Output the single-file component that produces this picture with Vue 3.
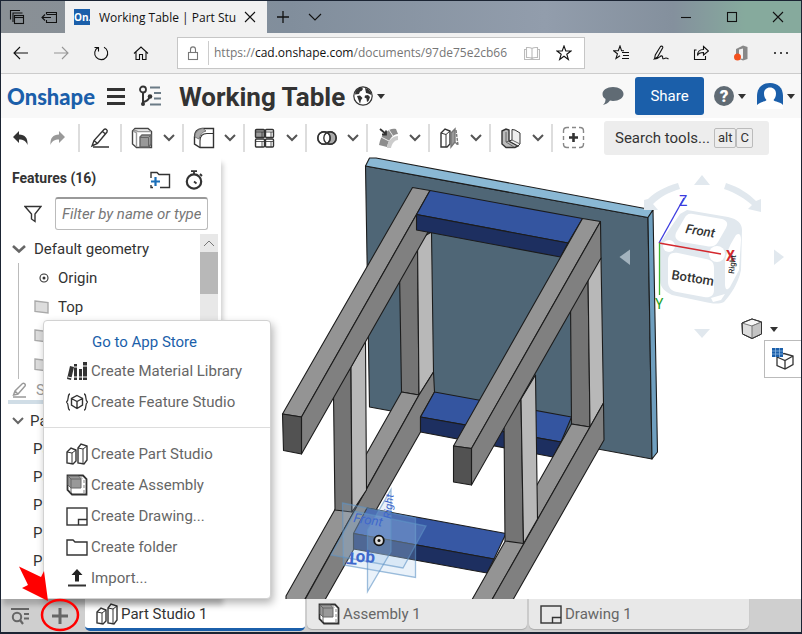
<script setup>
import { ref } from 'vue'

const filter = ref('')
const activeTab = ref('Part Studio 1')

const icons = {
  // window chrome
  tabsAside: '<path d="M1.5 10.5V1.5H11M4 13V4H13.5" /><rect x="5.5" y="6.5" width="9" height="8" /><path d="M5.5 8.5H14.5" />',
  setAside: '<path d="M5.5 5V3.5H15.5V13.5H5.5V11M5.5 5.5H15.5M10 8.5H1M4 5.5L1 8.5L4 11.5" />',
  back: '<path d="M15 8H1M7 2L1 8L7 14" />',
  forward: '<path d="M1 8H15M9 2L15 8L9 14" />',
  refresh: '<path d="M5 2.5A6.5 6.5 0 1 0 11 2.3M1.5 2.5H5.5V6.5" />',
  home: '<path d="M1 8.5L8 2L15 8.5M3 7V14.5H6.5V9.5H9.5V14.5H13V7" />',
  favorites: '<path d="M11 5.8H8.6L7 1L5.3 5.8H.5L4.400 8.8L3 13.5L7 10.8M9 7.5H16M10 10.5H16M9 13.5H16" />',
  pen: '<path d="M1.5 14L2.3 10L7.5 1.5C8.5.5 10.3 1.5 9.6 3L4.5 12L1.5 14C6 14.5 8 9 9.5 11.5C10 13 9 14.5 11.5 13.5C13 12.5 14 13 15.5 14" />',
  share: '<path d="M3.5 5H1.5V14.5H12.5V11M10.5 1.5L15.5 6L10.5 10V7.5C7 7.5 5 9 4.5 10.5C4.5 7 6.5 4.5 10.5 4.5Z" />',
  office: '<path d="M3 4L10 .5L14.5 2V14L10 15.5L5 13.5L10 13.8V3.500L6 4.5V10H3Z" fill="#888" stroke="none" /><circle cx="4.500" cy="12" r="3.5" fill="#f4511e" stroke="none" />',
  more: '<path d="M1 8H3M7 8H9M13 8H15" stroke-width="1.6" />',
  // feature toolbar
  extrude: '<path d="M4 1.5H17L20.5 4.5V20.5H5.5L1.5 17V4Z" fill="#fff" stroke="#444" /><path d="M2 4L5.5 6V20M3 3L7 4.5H20" stroke="#999" /><path d="M9 10L11 8H20V17L18 20H9Z" fill="#999" stroke="#666" /><path d="M9 10.5H17.5V20M17.5 10.5L20 8" stroke="#666" stroke-width="1" />',
  fillet: '<path d="M9 1.5H20.5V20.5H7L1.5 17V10C1.5 5 4 2 9 1.5Z" fill="#fff" /><path d="M7 20V14C7 9 10 6.500 14 6.5H20" stroke-width="1.1" /><path d="M2 10C2 5 5 2 10 1.5L13 4C9 5 7 8 6 12Z" fill="#aaa" stroke="#777" stroke-width="1" />',
  pattern: '<rect x="1.5" y="2.5" width="9" height="8" rx="1" fill="#9a9a9a" /><rect x="11.5" y="2.5" width="8" height="8" rx="1" /><rect x="1.5" y="12" width="9" height="8" rx="1" /><rect x="11.5" y="12" width="8" height="8" rx="1" /><path d="M2 5H10M12 5H19M2 14.5H10M12 14.5H19M8 5V10M17 5V10M8 14.5V20M17 14.5V20" stroke-width=".8" />',
  boolean: '<circle cx="14" cy="11" r="6.2" fill="#aaa" /><circle cx="8" cy="11" r="6.2" fill="#fff" /><circle cx="14" cy="11" r="6.2" /><circle cx="8" cy="11" r="6.2" />',
  move: '<path d="M8 6C12 2 16 1 19 2L21 7C16 7 12 12 10 20L2 18C3 12 5 8 8 6Z" fill="#8d8d8d" stroke="none" /><path d="M4 10L12 14M12 3L16 9" stroke="#eee" stroke-width="1" /><path d="M10 21C10 15 15 9 21 9V13C18 13 15 16 14 21Z" fill="#ccc" stroke="none" /><path d="M3 2L9 7M9 3.5V7.5H5" stroke-width="1.8" />',
  split: '<path d="M2 6L6 2L11 4V17L8 20H2Z" fill="#fff" /><path d="M2 6L7 7.5L11 4M7 7.5V20" stroke-width="1" /><path d="M12 6L16 2V15L12 20Z" fill="#999" stroke="#777" /><path d="M17 3L19 18L16 15" stroke="#777" stroke-dasharray="3 1" />',
  plane: '<path d="M2 4L6 2L9 3V14L18 19L15 20.5H6L2 17Z" fill="#bbb" /><path d="M9 14L12 13V2.5L15 3L20 6V17L18 19L9 14Z" fill="#eee" stroke-width="1" /><path d="M6 5V15L9 14M6 15L14 20M12 13L20 17" stroke="#666" stroke-width="1" />',
  addTool: '<path d="M7 1.5H5C3 1.5 1.5 3 1.5 5V7M10 1.5H14M17 1.5H18C20 1.5 21.5 3 21.5 5V7M21.5 10V14M21.5 17V18C21.5 20 20 21.5 18 21.5H17M14 21.5H10M7 21.5H5C3 21.5 1.5 20 1.5 18V17M1.5 14V10" stroke="#888" /><path d="M7 11.5H16M11.5 7V16" stroke-width="2.6" />',
  // document elements
  library: '<path d="M1 19L4 6L8 7L5 20ZM8 4H11V20H8ZM13 9H16V20H13ZM17 2H21V20H17Z" fill="#333" stroke="none" /><path d="M2 17L6 18M8 7H11M8 17H11M13 17H16M17 6H21M17 17H21" stroke="#fff" stroke-width="1" />',
  feature: '<path d="M4 3C1 3 3.5 9 .5 11C3.5 13 1 19 4 19M18 3C21 3 18.5 9 21.5 11C18.5 13 21 19 18 19" stroke-width="1.3" /><path d="M11 4.5L16.5 7.5V14L11 17.5L5.5 14V7.5ZM5.5 7.5L11 10.5L16.5 7.5M11 10.5V17.5" />',
  part: '<path d="M1 9L5 5L10 7V18L7 21L1 20Z" fill="#fff" /><path d="M1 9L6 10L10 7M6 10V21" stroke-width="1" /><path d="M12 5L15 1L21 3V17L18 21L12 20Z" fill="#fff" /><path d="M12 5L17 6L21 3M17 6V21" stroke-width="1" />',
  assembly: '<path d="M1.5 1.5H17L20.5 5V20.5H6L1.5 16Z" fill="#fff" stroke-width="1.8" /><path d="M2 2H12.5L15 5V14H5L2 11Z" fill="#999" stroke="#666" stroke-width="1" /><path d="M2 2L5 5H15M5 5V19" stroke="#666" stroke-width="1" /><path d="M14 3L18 6V20" stroke="#aaa" stroke-dasharray="3 2" />',
  drawing: '<rect x="1" y="3" width="20" height="17" /><path d="M12.5 20V14.5H21" />',
  folder: '<path d="M1 19V4H7L9 6H21V19Z" />',
  import: '<path d="M11 2L16.5 8H13V14.5H9V8H5.5Z" fill="#222" stroke="none" /><path d="M2 18.5H20" stroke-width="2" />',
}

const tools = ['extrude', 'fillet', 'pattern', 'boolean', 'move', 'split', 'plane']
const planes = ['Top', 'Front', 'Right']
const parts = ['Part 1', 'Part 2', 'Part 3', 'Part 4', 'Part 5']

const appItems = [
  { icon: 'library', label: 'Create Material Library' },
  { icon: 'feature', label: 'Create Feature Studio' },
]

const createItems = [
  { icon: 'part', label: 'Create Part Studio' },
  { icon: 'assembly', label: 'Create Assembly' },
  { icon: 'drawing', label: 'Create Drawing...' },
  { icon: 'folder', label: 'Create folder' },
  { icon: 'import', label: 'Import...' },
]

const tabs = [
  { icon: 'part', label: 'Part Studio 1' },
  { icon: 'assembly', label: 'Assembly 1' },
  { icon: 'drawing', label: 'Drawing 1' },
]

// painter's order, back to front
const faces = [
  { fill: '#4f6676', points: '365.5,166 648,217.5 652,459 369.5,407' },
  { fill: '#8ab8d4', points: '365.5,166 369.5,158 376,158 653,210 648,217.5' },
  { fill: '#6f9fbf', points: '648,217.5 653,210 657.5,452 652,459' },
  { fill: '#747474', points: '399.5,270 417.5,240 419,395 401.5,392' },
  { fill: '#b8b8b8', points: '417.5,240 431.5,232 433.5,372 419,395' },
  { fill: '#747474', points: '570.5,300 588,275 590,427 571.5,424' },
  { fill: '#b8b8b8', points: '588,275 601,258 603.5,403 590,427' },
  { fill: '#949494', points: '401.5,392 419,395 305,599 305,605 286,605 286,596' },
  { fill: '#808080', points: '419,395 433.5,372 434.5,392 420.5,417 420.5,432 322,605 302,605' },
  { fill: '#3455a0', points: '434.5,392 571.5,417 561,442 420.5,417' },
  { fill: '#1d2f60', points: '420.5,417 561,442 553,457 420.5,432' },
  { fill: '#3758a4', points: '367,508 506,533.5 494,559 353.5,533.5' },
  { fill: '#1d2f60', points: '353.5,533.5 494,559 487,573 353.5,549' },
  { fill: '#949494', points: '571.5,424 590,427 489,605 469,605' },
  { fill: '#808080', points: '590,427 603.5,403 604,440 510,605 489,605' },
  { fill: '#747474', points: '333.5,395 351,367 352,512 335,510' },
  { fill: '#b8b8b8', points: '351,367 365.5,341 366.5,490 352,512' },
  { fill: '#747474', points: '504,420 521,399 523.5,543.5 505,541' },
  { fill: '#b8b8b8', points: '521,399 535.5,375 537.5,519 523.5,543.5' },
  { fill: '#949494', points: '412.5,187.5 430,190.5 416.5,214.5 301.5,417 282.5,414' },
  { fill: '#808080', points: '416.5,214.5 428,232 301.5,454 301.5,417' },
  { fill: '#525252', points: '282.5,414 301.5,417 301.5,454 283.5,450.5' },
  { fill: '#3455a0', points: '430,190.5 582.5,218.5 568,243 416.5,214.5' },
  { fill: '#1d2f60', points: '416.5,214.5 568,243 560.5,257 416.5,230' },
  { fill: '#949494', points: '582.5,218.5 600.5,221.5 471.5,448.5 453.5,446' },
  { fill: '#808080', points: '600.5,221.5 601,258 471.5,485 471.5,448.5' },
  { fill: '#525252', points: '453.5,446 471.5,448.5 471.5,485 453.5,482' },
]

const datumPlanes = [
  '342.5,503 415.5,518 415.5,577.5 343.5,565',
  '355,511.5 426,526 403,568 331,555',
  '367.5,530 391,489.5 391,551.5 367.5,591.5',
]
</script>

<template>
  <div class="window">
    <header class="titlebar">
      <button class="chrome-btn" aria-label="Tabs set aside"><svg viewBox="0 0 16 16" v-html="icons.tabsAside"></svg></button>
      <button class="chrome-btn" aria-label="Set tabs aside"><svg viewBox="0 0 16 16" v-html="icons.setAside"></svg></button>
      <div class="browser-tab">
        <span class="favicon">On.</span>
        <span class="browser-tab-title">Working Table | Part Stu</span>
        <button class="tab-close" aria-label="Close tab">
          <svg viewBox="0 0 16 16"><path d="M3 3L13 13M13 3L3 13" /></svg>
        </button>
      </div>
      <button class="chrome-btn" aria-label="New tab"><svg viewBox="0 0 16 16"><path d="M8 2V14M2 8H14" stroke-width="1.3" /></svg></button>
      <button class="chrome-btn" aria-label="Tab list"><svg viewBox="0 0 16 16"><path d="M2 5L8 11L14 5" /></svg></button>
      <div class="spacer"></div>
      <button class="win-btn" aria-label="Minimize"><svg viewBox="0 0 16 16"><path d="M3 8.5H13" /></svg></button>
      <button class="win-btn" aria-label="Maximize"><svg viewBox="0 0 16 16"><rect x="3.5" y="3.5" width="9" height="9" /></svg></button>
      <button class="win-btn" aria-label="Close"><svg viewBox="0 0 16 16"><path d="M3 3L13 13M13 3L3 13" /></svg></button>
    </header>

    <nav class="navbar">
      <button class="nav-btn" aria-label="Back"><svg viewBox="0 0 16 16" v-html="icons.back"></svg></button>
      <button class="nav-btn faded" aria-label="Forward"><svg viewBox="0 0 16 16" v-html="icons.forward"></svg></button>
      <button class="nav-btn" aria-label="Refresh"><svg viewBox="0 0 16 16" v-html="icons.refresh"></svg></button>
      <button class="nav-btn" aria-label="Home"><svg viewBox="0 0 16 16" v-html="icons.home"></svg></button>
      <div class="address">
        <svg class="lock" viewBox="0 0 16 16"><rect x="3.5" y="7.5" width="9" height="7" /><path d="M5.5 7V4.5C5.5 1 10.5 1 10.5 4.5V7" /></svg>
        <span class="url">https://<b>cad.onshape.com</b>/documents/97de75e2cb66</span>
        <svg class="book" viewBox="0 0 16 16"><path d="M8 3.5C6 2 3 2.5 2.5 2.5V12.5C4 12.5 6 12 8 13.5C10 12 12 12.5 13.5 12.5V2.5C12 2.5 10 2 8 3.5V13.5M2 4.5H.5V14.5H15.5V4.5H14" /></svg>
        <svg class="star" viewBox="0 0 16 16"><path d="M8 1L9.8 6H15L10.8 9.2L12.4 14.5L8 11.3L3.6 14.5L5.2 9.2L1 6H6.2Z" /></svg>
      </div>
      <button class="nav-btn" aria-label="Favorites"><svg viewBox="0 0 16 16" v-html="icons.favorites"></svg></button>
      <button class="nav-btn" aria-label="Add notes"><svg viewBox="0 0 16 16" v-html="icons.pen"></svg></button>
      <button class="nav-btn" aria-label="Share page"><svg viewBox="0 0 16 16" v-html="icons.share"></svg></button>
      <button class="nav-btn" aria-label="Office"><svg viewBox="0 0 16 16" v-html="icons.office"></svg></button>
      <button class="nav-btn" aria-label="More"><svg viewBox="0 0 16 16" v-html="icons.more"></svg></button>
    </nav>

    <div class="doc-header">
      <a class="logo" href="#">Onshape</a>
      <button class="icon-btn menu-btn" aria-label="Main menu">
        <svg width="20" height="20" viewBox="0 0 20 20"><path d="M1 3.5H19M1 10.5H19M1 17.5H19" stroke-width="3" /></svg>
      </button>
      <button class="icon-btn" aria-label="Versions and history">
        <svg width="24" height="22" viewBox="0 0 24 22">
          <circle cx="5" cy="4.5" r="3" stroke-width="1.8" />
          <path d="M5 8V20M5 17C10 16 11 14 11.5 12" stroke-width="2" />
          <circle cx="5" cy="19" r="2" fill="#333" stroke="none" /><circle cx="12" cy="11.5" r="2.3" fill="#333" stroke="none" />
          <path d="M12 2.5H22M16 8H23M16 13.5H23M12 19.5H23" stroke="#6b7b86" stroke-width="1.8" />
        </svg>
      </button>
      <h1>Working Table</h1>
      <button class="icon-btn" aria-label="Public document">
        <svg width="20" height="20" viewBox="0 0 20 20">
          <circle cx="10" cy="10" r="9.2" fill="#fff" stroke-width="1.2" />
          <path d="M2.5 5L6 2L9 1.5L10 3L8.5 5L7 5.500L6 8L2 8.5ZM4 10L7 9.500L9.5 12L8 14L7 18L5.5 14ZM12 2L15 3L18 6.500L18.5 9L15 7.5L13 7L12.500 4.5ZM12 9.500L15 9L17 11L15.5 15L14 16L13.5 12.500L11.5 11.5Z" fill="#333" stroke="none" />
        </svg>
        <span class="caret"></span>
      </button>
      <div class="spacer"></div>
      <button class="icon-btn comment-btn" aria-label="Comments">
        <svg width="22" height="20" viewBox="0 0 22 20"><path d="M11 1C17 1 21.5 4 21.5 8C21.5 12 17 15 11 15C10 15 9 15 8 14.6C6 17 4 18.5 1 19C3 17 3.5 15.5 3.5 13C1.5 12 .5 10 .5 8C.5 4 5 1 11 1Z" fill="#606b74" stroke="none" /></svg>
      </button>
      <button class="share-btn">Share</button>
      <button class="icon-btn help-btn" aria-label="Help">
        <span class="help">?</span><span class="caret"></span>
      </button>
      <button class="icon-btn" aria-label="Account">
        <svg width="26" height="26" viewBox="0 0 26 26">
          <path d="M0 24V13C0 5 5 0 13 0S26 5 26 13V24Z" fill="#1b5faa" stroke="none" />
          <path d="M13 4.5C9.5 4.5 7 7 7 10.5C7 13.5 8 15.5 9.5 17C8 19 3 18.5 0 22V26H26V22C23 18.5 18 19 16.5 17C18 15.5 19 13.5 19 10.5C19 7 16.5 4.5 13 4.5Z" fill="#fff" stroke="none" />
        </svg>
        <span class="caret"></span>
      </button>
    </div>

    <div class="toolbar">
      <button class="icon-btn undo" aria-label="Undo">
        <svg width="16" height="16" viewBox="0 0 16 16"><path d="M6 1V4.5C12 4.5 15 8 14.5 15C13 11 10.5 9.5 6 9.5V13L0 7Z" fill="#333" stroke="none" /></svg>
      </button>
      <button class="icon-btn redo" aria-label="Redo">
        <svg width="16" height="16" viewBox="0 0 16 16"><path d="M10 1V4.5C4 4.5 1 8 1.5 15C3 11 5.5 9.5 10 9.5V13L16 7Z" fill="#999" stroke="none" /></svg>
      </button>
      <button class="icon-btn sketch" aria-label="Sketch">
        <svg width="20" height="22" viewBox="0 0 20 22"><path d="M2 19L4 13.5L14 2.5C15.5 1 18 3 17 5L7.5 16.5ZM4 13.5L7.5 16.5M12.5 4.5L15.5 7" stroke-width="1.4" /><path d="M3 20H19" stroke-width="1.5" /></svg>
      </button>
      <div class="tool-groups">
        <div v-for="tool in tools" :key="tool" class="tool-group">
          <button class="icon-btn" :aria-label="tool"><svg width="22" height="22" viewBox="0 0 22 22" v-html="icons[tool]"></svg></button>
          <button class="icon-btn" :aria-label="tool + ' options'"><svg width="12" height="10" viewBox="0 0 12 10"><path d="M1 2L6 7L11 2" stroke="#555" stroke-width="2" /></svg></button>
        </div>
      </div>
      <button class="icon-btn add-tool" aria-label="Add custom features"><svg width="23" height="23" viewBox="0 0 23 23" v-html="icons.addTool"></svg></button>
      <button class="search-tools">Search tools... <span class="keys"><kbd>alt</kbd><kbd>C</kbd></span></button>
    </div>

    <main class="workspace">
      <aside class="sidebar">
        <div class="sidebar-head">
          <h2>Features (16)</h2>
          <button class="icon-btn" aria-label="Add folder">
            <svg width="22" height="18" viewBox="0 0 22 18"><path d="M2 7V1.5H8L10 3.5H20.5V16.5H11M2 14V16.5H4" /><path d="M2 10.5H11M6.5 6V15" stroke="#1b6fb8" stroke-width="2.2" /></svg>
          </button>
          <button class="icon-btn" aria-label="Regeneration times">
            <svg width="20" height="20" viewBox="0 0 20 20"><circle cx="10" cy="11.5" r="7.2" stroke-width="2.2" /><path d="M7 1.2H13M10 1V4M16 4L18 6M10 11.5L12.5 13.5" stroke-width="1.8" /></svg>
          </button>
        </div>
        <div class="filter-row">
          <svg width="18" height="18" viewBox="0 0 18 18"><path d="M1 1.5H17L11 9V16.5L7.5 14V9Z" /></svg>
          <input v-model="filter" type="text" aria-label="Filter features" placeholder="Filter by name or type" />
        </div>
        <div class="list-wrap">
          <ul class="feature-list">
            <li class="row group-row">
              <svg width="14" height="10" viewBox="0 0 14 10"><path d="M1 2L7 7.5L13 2" stroke="#666" stroke-width="2.6" /></svg>
              Default geometry
            </li>
            <li class="geometry">
              <ul>
                <li class="row">
                  <svg width="16" height="12" viewBox="0 0 16 12"><circle cx="10" cy="6" r="4" stroke-width="1.1" /><circle cx="10" cy="6" r="1.5" fill="#333" stroke="none" /></svg>
                  Origin
                </li>
                <li v-for="plane in planes" :key="plane" class="row">
                  <svg width="16" height="14" viewBox="0 0 16 14"><path d="M1 1L14 2.5V13L1 11.5Z" fill="#ddd" stroke="#aaa" /></svg>
                  {{ plane }}
                </li>
              </ul>
            </li>
            <li class="row sketch-row">
              <svg width="16" height="16" viewBox="0 0 16 16"><path d="M1.5 13L3 9L10.5 1.5C12 .5 14 2.5 13 4L6 12ZM3 9L6 12M1 15H14" stroke="#999" /></svg>
              Sketch 1
            </li>
            <li class="row parts-row">
              <svg width="12" height="10" viewBox="0 0 12 10"><path d="M1 2L6 7L11 2" stroke="#666" stroke-width="2" /></svg>
              Parts (13)
            </li>
            <li v-for="part in parts" :key="part" class="row part-row">{{ part }}</li>
          </ul>
          <div class="scrollbar">
            <svg width="18" height="18" viewBox="0 0 18 18"><path d="M4 12L9 7L14 12" stroke="#777" stroke-width="1" /></svg>
            <div class="thumb"></div>
          </div>
        </div>
      </aside>

      <section class="canvas">
        <svg class="model" viewBox="221 157 580 442" preserveAspectRatio="xMinYMin meet">
          <g stroke="#1c1c1c" stroke-width="1.1" stroke-linejoin="round">
            <polygon v-for="(face, i) in faces" :key="i" :points="face.points" :fill="face.fill" />
          </g>
          <g fill="#9fc3e6" fill-opacity=".22" stroke="#5d92c4" stroke-opacity=".6" stroke-width="1.3">
            <polygon v-for="points in datumPlanes" :key="points" :points="points" />
          </g>
          <g class="datum-names">
            <text transform="translate(353 522) rotate(9)" font-size="13" font-style="italic">Front</text>
            <text transform="translate(347 552) rotate(4) scale(1 -1)" font-size="17" font-weight="700">Top</text>
            <text transform="translate(391 519) rotate(-84)" font-size="11" font-style="italic">Right</text>
          </g>
          <circle cx="379" cy="540.5" r="4.8" fill="#ddd" stroke="#111" stroke-width="1.8" />
          <circle cx="379" cy="540.5" r="1.5" fill="#111" />
        </svg>

        <svg class="view-cube" width="182" height="175" viewBox="618 170 182 175">
          <g fill="#e1e8ee">
            <path d="M702 175L710 185H694Z" /><path d="M702 338L710 329H694Z" />
            <path d="M619.5 257L630 249.5V265Z" fill="#a3b3be" /><path d="M784 257L774 249.5V265Z" />
            <path d="M678 183C664 187 654 193 648 199L644 200V210L658 210L653 204C660 197 669 192 680 189Z" />
            <path d="M726 183C739 187 749 194 756 201L761 199V212L748 209L752 205C745 199 736 193 724 189Z" />
            <path d="M687 210L728 217C738 219 742 224 742 230L741 270C738 285 730 295 724 302C718 305 710 303 705 302L672 295C666 292 660 288 660 280L660 243L680 214Z" />
          </g>
          <g fill="#fff">
            <path d="M693 214L722 219C728 221 728 224 726 228L718 242C715 247 711 247 706 246L682 242C675 240 674 236 677 231L684 219C686 215 688 213 693 214Z" />
            <path d="M678 253L706 259C712 260 714 263 714 268V290C714 296 710 298 704 297L677 292C671 291 668 287 668 282V260C668 255 671 252 678 253Z" />
            <path d="M736 235C740 232 741 236 741 240L739 270L730 287C726 292 725 288 725 283V262C726 252 731 243 736 235Z" />
            <circle cx="717" cy="254" r="8" /><circle cx="669" cy="246" r="6" />
            <path d="M711 298L725 294L721 300L713 302Z" />
          </g>
          <g stroke-width="1.3">
            <path d="M659 243L684 198" stroke="#3c3ce0" />
            <path d="M659 243L721 254" stroke="#d4282e" />
            <path d="M659.5 243V295" stroke="#3fb52f" />
          </g>
          <text x="679" y="206" font-size="14" fill="#3c3ce0">Z</text>
          <text x="726" y="261" font-size="14" font-weight="700" fill="#d4282e">X</text>
          <text x="655" y="309" font-size="14" fill="#1ea01e">Y</text>
          <g fill="#333" font-weight="500">
            <text transform="translate(685 233) rotate(9)" font-size="13" font-style="italic">Front</text>
            <text transform="translate(671 279) rotate(9)" font-size="13">Bottom</text>
            <text transform="translate(734 274) rotate(-84)" font-size="8">Right</text>
          </g>
        </svg>

        <button class="icon-btn view-btn" aria-label="View options">
          <svg width="22" height="22" viewBox="0 0 22 22" stroke-linejoin="round"><g stroke-width="1"><path d="M1 5L11 1L20.5 4V16L11 20.5L1.5 16Z" fill="#ddd" /><path d="M1 5L11 8L20.5 4L11 1Z" fill="#f6f6f6" stroke="#777" /><path d="M11 8V20.5L20.5 16V4Z" fill="#c4c4c4" stroke="#777" /><path d="M1 5L11 1L20.5 4V16L11 20.5L1.5 16Z" /></g></svg>
          <span class="caret"></span>
        </button>
        <button class="panel-btn" aria-label="Configuration panel">
          <svg width="22" height="22" viewBox="0 0 22 22"><path d="M5 9L12 5.5L21 8V16.5L13 21L5 17.5ZM5 9L13 12.5L21 8M13 12.5V21" fill="#fff" stroke-width="1.3" /><rect x="0" y="0" width="11" height="9" fill="#1b5faa" stroke="none" /><path d="M0 3H11M0 6H11M3.5 0V9M7.5 0V9" stroke="#9cc3ea" stroke-width=".7" /></svg>
        </button>
      </section>

      <div class="create-menu" role="menu">
        <a class="store-link" href="#" role="menuitem">Go to App Store</a>
        <button v-for="item in appItems" :key="item.label" class="menu-item" role="menuitem">
          <svg width="22" height="22" viewBox="0 0 22 22" v-html="icons[item.icon]"></svg>{{ item.label }}
        </button>
        <hr />
        <button v-for="item in createItems" :key="item.label" class="menu-item" role="menuitem">
          <svg width="22" height="22" viewBox="0 0 22 22" v-html="icons[item.icon]"></svg>{{ item.label }}
        </button>
      </div>
    </main>

    <footer class="tabbar">
      <button class="icon-btn tab-manager" aria-label="Tab manager">
        <svg width="20" height="18" viewBox="0 0 20 18"><path d="M1 2H19M14 7H19M14 11.5H19" stroke="#666" stroke-width="1.8" /><circle cx="7" cy="10" r="4.2" stroke="#666" stroke-width="2" /><path d="M10 13L13 17" stroke="#666" stroke-width="2.2" /></svg>
      </button>
      <button class="icon-btn insert" aria-label="Insert new element">
        <svg width="18" height="18" viewBox="0 0 18 18"><path d="M1 9H17M9 1V17" stroke="#666" stroke-width="3" /></svg>
        <svg class="callout" width="66" height="68" viewBox="15 565 66 68">
          <path d="M19 566.5L41 577L44 571L48 601L22 588L28 585Z" fill="#f00" stroke="none" />
          <ellipse cx="60" cy="615" rx="18" ry="15" stroke="#f00" stroke-width="2.5" />
        </svg>
      </button>
      <button
        v-for="tab in tabs"
        :key="tab.label"
        class="tab"
        :class="{ active: tab.label === activeTab }"
        @click="activeTab = tab.label"
      >
        <svg width="22" height="22" viewBox="0 0 22 22" v-html="icons[tab.icon]"></svg>{{ tab.label }}
      </button>
    </footer>
  </div>
</template>

<style>
body {
  margin: 0;
}
</style>

<style scoped>
.window {
  display: flex;
  flex-direction: column;
  box-sizing: border-box;
  min-height: 100vh;
  border: 1px solid #1b2433;
  border-bottom-width: 2px;
  background: #fff;
  color: #333;
  font-family: Roboto, "Liberation Sans", sans-serif;
  font-size: 15px;
  overflow: hidden;
}

.window * {
  box-sizing: border-box;
}

svg {
  flex: none;
  fill: none;
  stroke: #333;
  stroke-width: 1.4;
}

button {
  padding: 0;
  border: 0;
  background: none;
  color: inherit;
  font: inherit;
}

ul {
  margin: 0;
  padding: 0;
  list-style: none;
}

.spacer {
  flex: 1;
}

.titlebar,
.navbar {
  display: flex;
  align-items: center;
  font-family: "Open Sans", "Noto Sans", sans-serif;
  font-size: 12px;
}

.titlebar svg,
.navbar svg {
  width: 16px;
  height: 16px;
  stroke: #111;
  stroke-width: 1.1;
}

.titlebar {
  height: 32px;
  background: linear-gradient(90deg, #8a9095 0%, #818e9c 36%, #929dac 68%, #84909d 84%, #86aa9d 93%, #86aa9d 100%);
}

.chrome-btn,
.win-btn {
  display: flex;
  align-items: center;
  justify-content: center;
  width: 32px;
  height: 32px;
}

.win-btn {
  width: 46px;
}

.browser-tab {
  display: flex;
  align-items: center;
  width: 202px;
  height: 32px;
  padding-left: 9px;
  background: #f1f1f1;
  color: #111;
}

.favicon {
  width: 16px;
  height: 16px;
  background: #1b5faa;
  color: #fff;
  font-size: 10px;
  font-weight: 700;
  line-height: 16px;
  overflow: hidden;
}

.browser-tab-title {
  flex: 1;
  margin-left: 9px;
  white-space: nowrap;
  overflow: hidden;
}

.tab-close {
  display: flex;
  margin-right: 9px;
}

.navbar {
  height: 41px;
  border-bottom: 1px solid #ccc;
  background: #f1f1f1;
}

.nav-btn {
  display: flex;
  align-items: center;
  justify-content: center;
  flex: none;
  width: 40px;
  height: 40px;
}

.nav-btn.faded {
  opacity: 0.4;
}

.address {
  display: flex;
  align-items: center;
  flex: 1;
  min-width: 0;
  height: 32px;
  margin: 0 16px;
  padding-left: 7px;
  border: 1px solid #c6c6c6;
  background: #fff;
  color: #767676;
}

.address .lock {
  stroke: #777;
}

.url {
  flex: 1;
  margin-left: 7px;
  padding-left: 5px;
  border-left: 1px solid #ccc;
  line-height: 24px;
  white-space: nowrap;
  overflow: hidden;
}

.url b {
  color: #111;
  font-weight: 400;
}

.address .book {
  margin: 0 16px 0 8px;
  stroke: #bbb;
}

.address .star {
  margin-right: 12px;
}

.doc-header {
  display: flex;
  align-items: center;
  height: 44px;
  padding: 0 6px;
  background: #f8f8f8;
}

.logo {
  width: 99px;
  color: #1b5faa;
  font-family: Lato, sans-serif;
  font-size: 22px;
  font-weight: 900;
  text-decoration: none;
}

.icon-btn {
  display: flex;
  align-items: center;
  flex: none;
}

.menu-btn {
  margin-right: 12px;
}

h1 {
  margin: 2px 8px 0 17px;
  font-size: 26px;
  font-weight: 700;
  white-space: nowrap;
}

.caret {
  width: 0;
  margin-left: 4px;
  border: 4px solid transparent;
  border-top: 5px solid #333;
  border-bottom: 0;
}

.comment-btn {
  margin-right: 11px;
}

.share-btn {
  width: 69px;
  height: 38px;
  border-radius: 3px;
  background: #1b5faa;
  color: #fff;
}

.help-btn {
  margin: 0 11px 0 10px;
}

.help {
  width: 20px;
  height: 20px;
  border-radius: 50%;
  background: #606b74;
  color: #fff;
  font-size: 17px;
  font-weight: 900;
  line-height: 20px;
}

.toolbar {
  display: flex;
  align-items: center;
  height: 39px;
}

.undo {
  margin-left: 12px;
}

.redo {
  margin: 0 13px 0 20px;
}

.sketch {
  width: 42px;
  height: 28px;
  padding-left: 10px;
  border-left: 2px solid #ddd;
}

.tool-groups {
  display: grid;
  grid-template-columns: repeat(7, 1fr);
  width: 431px;
}

.tool-group {
  display: flex;
  align-items: center;
  justify-content: space-between;
  height: 28px;
  padding: 0 7px 0 9px;
  border-left: 2px solid #ddd;
}

.add-tool {
  height: 28px;
  padding-left: 9px;
  border-left: 2px solid #ddd;
}

.search-tools {
  display: flex;
  align-items: center;
  gap: 4px;
  width: 165px;
  height: 34px;
  margin-left: 19px;
  padding-left: 11px;
  border-radius: 3px;
  background: #ededed;
  white-space: nowrap;
}

.keys {
  display: flex;
}

kbd {
  height: 20px;
  padding: 0 3px;
  border: 1px solid #bbb;
  border-radius: 2px;
  font-family: inherit;
  font-size: 13px;
  line-height: 18px;
}

.workspace {
  position: relative;
  display: flex;
  flex: 1;
}

.sidebar {
  display: flex;
  flex-direction: column;
  width: 220px;
  box-shadow: 2px 6px 5px rgba(0, 0, 0, 0.2);
}

.sidebar-head {
  display: flex;
  align-items: center;
  gap: 13px;
  height: 40px;
  padding: 6px 17px 0 11px;
}

h2 {
  flex: 1;
  margin: 0;
  font-size: 14px;
  font-weight: 700;
  line-height: 20px;
  padding-bottom: 4px;
  white-space: nowrap;
}

.filter-row {
  display: flex;
  align-items: center;
  gap: 13px;
  padding: 0 13px 0 23px;
}

.filter-row input {
  flex: 1;
  min-width: 0;
  height: 33px;
  padding: 0 6px;
  border: 1px solid #bbb;
  border-top: 2px solid #999;
  border-radius: 3px;
  font: italic 15px Roboto, "Liberation Sans", sans-serif;
}

.filter-row input::placeholder {
  color: #777;
}

.list-wrap {
  display: flex;
  flex: 1;
  margin-top: 4px;
}

.feature-list {
  flex: 1;
}

.row {
  display: flex;
  align-items: center;
  gap: 8px;
  height: 29px;
  padding-left: 11px;
  white-space: nowrap;
}

.geometry {
  margin-left: 17px;
  border-left: 1px solid #bbb;
}

.geometry .row {
  padding-left: 15px;
}

.sketch-row {
  height: 25px;
  margin-left: 7px;
  padding-left: 4px;
  border-bottom: 4px solid #d0dde6;
  color: #999;
}

.parts-row {
  height: 28px;
  margin-top: 3px;
  gap: 6px;
}

.part-row {
  height: 28px;
  padding-left: 32px;
}

.scrollbar {
  width: 18px;
  margin-right: 3px;
  background: #e8e8e8;
}

.scrollbar svg {
  display: block;
}

.thumb {
  height: 42px;
  background: #b8b8b8;
}

.canvas {
  position: relative;
  flex: 1;
  min-width: 0;
}

.model,
.view-cube {
  stroke: none;
}

.model {
  display: block;
  width: 100%;
}

.datum-names {
  fill: #3f68cc;
}

.view-cube {
  position: absolute;
  top: 13px;
  right: 1px;
}

.view-btn {
  position: absolute;
  top: 161px;
  right: 23px;
}

.panel-btn {
  position: absolute;
  top: 183px;
  right: 0;
  display: flex;
  align-items: center;
  width: 37px;
  height: 38px;
  padding-left: 7px;
  border: 1px solid #bbb;
  border-right: 0;
  background: #fff;
}

.view-btn .caret {
  margin-left: 7px;
}

.create-menu {
  position: absolute;
  bottom: 0;
  left: 42px;
  z-index: 2;
  display: flex;
  flex-direction: column;
  width: 228px;
  padding: 5px 0;
  border: 1px solid #d2d2d2;
  border-radius: 4px;
  background: #fff;
  box-shadow: 2px 4px 8px rgba(0, 0, 0, 0.3);
}

.store-link {
  padding: 3px 0 0 48px;
  color: #1b5faa;
  line-height: 26px;
  text-decoration: none;
}

.menu-item {
  display: flex;
  align-items: center;
  gap: 3px;
  height: 31px;
  padding-left: 22px;
  color: #666;
  text-align: left;
}

hr {
  width: 100%;
  margin: 10px 0;
  border: 0;
  border-top: 1px solid #ddd;
}

.tabbar {
  display: flex;
  gap: 2px;
  height: 33px;
  background: #cfcfcf;
}

.tab-manager {
  width: 40px;
  padding-left: 9px;
}

.insert {
  position: relative;
  width: 40px;
  padding-left: 8px;
}

.callout {
  position: absolute;
  top: -34px;
  left: -28px;
  z-index: 3;
}

.tab {
  display: flex;
  align-items: center;
  gap: 3px;
  width: 220px;
  height: 30px;
  padding-left: 11px;
  border-radius: 0 0 5px 5px;
  background: #e8e8e8;
  box-shadow: 0 1px 1px #aaa;
  color: #666;
}

.tab.active {
  height: 32px;
  border-bottom: 3px solid #1b5faa;
  background: #fff;
  box-shadow: none;
  color: #333;
}
</style>
